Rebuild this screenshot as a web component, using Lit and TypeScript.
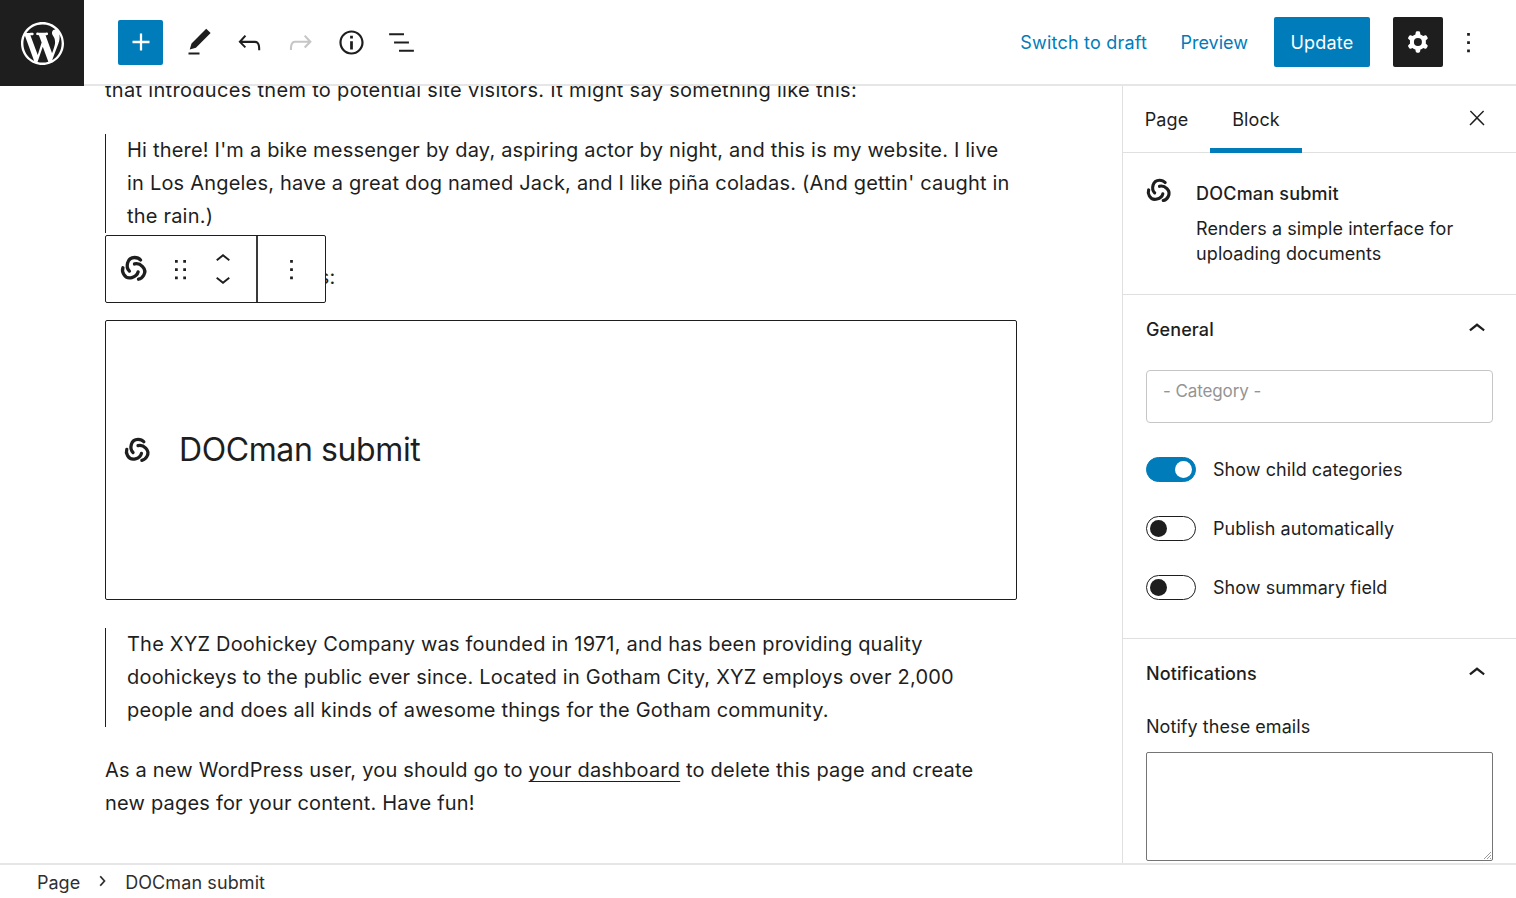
import { LitElement, html, css, svg } from "lit";
import { customElement } from "lit/decorators.js";

const P = {
  wp: "M20 10c0-5.51-4.49-10-10-10C4.48 0 0 4.49 0 10c0 5.52 4.48 10 10 10 5.51 0 10-4.48 10-10zM7.78 15.37L4.37 6.22c.55-.02 1.17-.08 1.17-.08.5-.06.44-1.13-.06-1.11 0 0-1.45.11-2.37.11-.18 0-.37 0-.58-.01C4.12 2.69 6.87 1.11 10 1.11c2.33 0 4.45.87 6.05 2.34-.68-.11-1.65.39-1.65 1.58 0 .74.45 1.36.9 2.1.35.61.55 1.36.55 2.46 0 1.49-1.4 5-1.4 5l-3.03-8.37c.54-.02.82-.17.82-.17.5-.05.44-1.25-.06-1.22 0 0-1.44.12-2.38.12-.87 0-2.33-.12-2.33-.12-.5-.03-.56 1.2-.06 1.22l.92.08 1.26 3.41zM17.41 10c.24-.64.74-1.87.43-4.25.7 1.29 1.05 2.71 1.05 4.25 0 3.29-1.73 6.24-4.4 7.78.97-2.59 1.94-5.2 2.92-7.78zM6.1 18.09C3.12 16.65 1.11 13.53 1.11 10c0-1.3.23-2.48.72-3.59C3.25 10.3 4.67 14.2 6.1 18.09zm4.03-6.63l2.58 6.98c-.86.29-1.76.45-2.71.45-.79 0-1.57-.11-2.29-.33.81-2.38 1.62-4.74 2.42-7.1z",
  plus: "M18 11.2h-5.2V6h-1.6v5.2H6v1.6h5.2V18h1.6v-5.2H18z",
  edit: "M20.1 5.1L16.9 2 6.2 12.7l-1.3 4.4 4.5-1.3L20.1 5.1zM4 20.8h8v-1.5H4v1.5z",
  undo: "M18.3 11.7c-.6-.6-1.4-.9-2.3-.9H6.7l2.9-3.3-1.1-1-4.5 5L8.5 16l1-1-2.7-2.7H16c.5 0 .9.2 1.3.5 1 1 1 3.4 1 4.5v.3h1.5v-.2c0-1.5 0-4.3-1.5-5.7z",
  redo: "M15.6 6.5l-1.1 1 2.9 3.3H8c-.9 0-1.7.3-2.3.9-1.4 1.5-1.4 4.2-1.4 5.6v.2h1.5v-.3c0-1.1 0-3.5 1-4.5.3-.3.7-.5 1.3-.5h9.2L14.5 15l1.1 1.1 4.6-4.6-4.6-5z",
  info: "M12 3.2c-4.8 0-8.8 3.9-8.8 8.8 0 4.8 3.9 8.8 8.8 8.8 4.8 0 8.8-3.9 8.8-8.8 0-4.8-4-8.8-8.8-8.8zm0 16c-4 0-7.2-3.3-7.2-7.2C4.8 8 8 4.8 12 4.8s7.2 3.3 7.2 7.2c0 4-3.2 7.2-7.2 7.2zM11 17h2v-6h-2v6zm0-8h2V7h-2v2z",
  list: "M13.8 5.2H3v1.5h10.8V5.2zm-3.6 12v1.5H21v-1.5H10.2zm7.2-6H6.6v1.5h10.8v-1.5z",
  cog: "M10.289 4.836A1 1 0 0111.275 4h1.306a1 1 0 01.987.836l.244 1.466c.787.26 1.503.679 2.108 1.218l1.393-.522a1 1 0 011.216.437l.653 1.13a1 1 0 01-.23 1.273l-1.148.944a6.025 6.025 0 010 2.435l1.149.946a1 1 0 01.23 1.272l-.653 1.13a1 1 0 01-1.216.437l-1.394-.522c-.605.54-1.32.958-2.108 1.218l-.244 1.466a1 1 0 01-.987.836h-1.306a1 1 0 01-.986-.836l-.244-1.466a5.995 5.995 0 01-2.108-1.218l-1.394.522a1 1 0 01-1.217-.436l-.653-1.131a1 1 0 01.23-1.272l1.149-.946a6.026 6.026 0 010-2.435l-1.148-.944a1 1 0 01-.23-1.272l.653-1.131a1 1 0 011.217-.437l1.393.522a5.994 5.994 0 012.108-1.218l.244-1.466zM14.929 12a3 3 0 11-6 0 3 3 0 016 0z",
  more: "M13 19h-2v-2h2v2zm0-6h-2v-2h2v2zm0-6h-2V5h2v2z",
  close: "M13 11.8l6.1-6.3-1-1-6.1 6.2-6.1-6.2-1 1 6.1 6.3-6.5 6.7 1 1 6.5-6.6 6.5 6.6 1-1z",
  up: "M6.5 12.4L12 8l5.5 4.4-.9 1.2L12 10l-4.5 3.6-1-1.2z",
  down: "M17.5 11.6L12 16l-5.5-4.4.9-1.2L12 14l4.5-3.6 1 1.2z",
  drag: "M8 7h2V5H8v2zm0 6h2v-2H8v2zm0 6h2v-2H8v2zm6-14v2h2V5h-2zm0 8h2v-2h-2v2zm0 6h2v-2h-2v2z",
  right: "M10.6 6L9.4 7l4.6 5-4.6 5 1.2 1 5.4-6z",
};

const icon = (d: string, size = 24, cls = "", vb = "0 0 24 24") =>
  html`<svg class=${cls} width=${size} height=${size} viewBox=${vb} fill="currentColor" fill-rule="evenodd" aria-hidden="true">${svg`<path d=${d}></path>`}</svg>`;

const BLADE = "M9 14.8 C5.6 11.5 6.8 3 13.5 3 C15.8 3 17.6 3.9 18.7 5.2";
const swirl = (size: number) => html`<svg width=${size} height=${size} viewBox="0 0 26 26" fill="none" stroke="currentColor" stroke-width="2.9" stroke-linecap="round" aria-hidden="true">
  ${svg`<path d=${BLADE}></path><path d=${BLADE} transform="rotate(120 13 13)"></path><path d=${BLADE} transform="rotate(240 13 13)"></path>`}
</svg>`;

@customElement("app-root")
export class AppRoot extends LitElement {
  static styles = css`
    :host { display: block; height: 898px; overflow: hidden; background: #fff; color: #1e1e1e;
      font-family: Inter, "Noto Sans", sans-serif; font-size: 18px; }
    * { box-sizing: border-box; }
    svg { display: block; flex: none; }
    .page { height: 898px; display: flex; flex-direction: column; position: relative; }

    .top { height: 86px; flex: none; display: flex; align-items: flex-start; border-bottom: 2px solid #e6e6e6; position: relative; z-index: 2; background: #fff; }
    .logo { width: 84px; height: 86px; background: #1e1e1e; color: #fff; display: flex; align-items: center; justify-content: center; flex: none; }
    .tools { display: flex; align-items: center; height: 84px; margin-left: 34px; }
    .add { width: 45px; height: 45px; background: #007cba; color: #fff; border-radius: 2px; display: flex; align-items: center; justify-content: center; margin-right: 18px; }
    .tool { width: 36px; height: 36px; display: flex; align-items: center; justify-content: center; margin-right: 14.7px; }
    .tool.off { color: #c6c6c6; }
    .actions { margin-left: auto; display: flex; align-items: center; height: 84px; }
    .link { color: #007cba; font-size: 18px; letter-spacing: .2px; }
    .link.a { margin-right: 33.4px; }
    .link.pv { letter-spacing: 0; }
    .update { margin-left: 26px; width: 96px; height: 50px; background: #007cba; color: #fff; border-radius: 2px; display: flex; align-items: center; justify-content: center; font-size: 18px; letter-spacing: .2px; }
    .gear { margin-left: 23px; width: 50px; height: 50px; background: #1e1e1e; color: #fff; border-radius: 2px; display: flex; align-items: center; justify-content: center; }
    .dots { width: 28px; margin: 0 34px 0 11px; display: flex; justify-content: center; }

    .mid { flex: 1; min-height: 0; display: flex; }
    .editor { flex: 1; min-width: 0; overflow: hidden; position: relative; }
    .flow { width: 912px; margin: -12px 0 0 105px; position: relative; font-size: 20px; line-height: 33px; letter-spacing: .2px; color: #1e1e1e; }
    .flow p { margin: 0; }
    .flow p.intro { letter-spacing: .31px; }
    .flow p.sel { border-left: 1px solid #1e1e1e; padding-left: 21px; }
    .flow p.gap1 { margin-top: 27px; }
    .flow p.under { margin-top: 28px; letter-spacing: .25px; }
    .ph { margin-top: 26px; height: 280px; border: 1px solid #1e1e1e; border-radius: 2px; display: flex; align-items: center; padding: 0 0 20px 17px; gap: 27px; }
    .ph span { font-size: 32px; letter-spacing: -.4px; line-height: 40px; }
    .flow p.after { margin-top: 28px; }
    .flow p.last { margin-top: 27px; }
    .last u { text-underline-offset: 4px; text-decoration-thickness: 1px; }
    .bar { position: absolute; left: 0; top: 161px; width: 221px; height: 68px; border: 1px solid #1e1e1e; border-radius: 2px; background: #fff; display: flex; }
    .bar-a { width: 152px; border-right: 2px solid #3a3a3a; display: flex; align-items: center; }
    .bar-a .s { margin-left: 13px; }
    .bar-a .d { margin-left: 15px; }
    .mv { margin-left: 11px; display: flex; flex-direction: column; }
    .mv svg + svg { margin-top: -10px; }
    .bar-b { flex: 1; display: flex; align-items: center; justify-content: center; }

    .side { width: 394px; flex: none; border-left: 1px solid #e0e0e0; overflow: hidden; font-size: 18px; letter-spacing: .06px; }
    .tabs { height: 67px; display: flex; align-items: stretch; border-bottom: 1px solid #e0e0e0; position: relative; letter-spacing: .1px; }
    .tab { display: flex; align-items: center; justify-content: center; font-size: 18px; height: 66px; position: relative; }
    .tab.p { width: 87px; }
    .tab.b { width: 92px; box-shadow: inset 0 -5px 0 #007cba; height: 67px; }
    .x { margin-left: auto; margin-right: 27px; display: flex; align-items: center; height: 66px; }
    .x svg { position: relative; top: -1px; }
    .card { height: 142px; border-bottom: 1px solid #e0e0e0; padding: 24px 23px 0 21.5px; display: flex; gap: 23.6px; }
    .card h2 { margin: 5px 0 0; font-size: 18px; font-weight: 500; line-height: 24px; letter-spacing: .2px; }
    .card p { margin: 10px 0 0; line-height: 25px; }
    .panel { padding: 0 23px; }
    .gen { height: 344px; border-bottom: 1px solid #e0e0e0; }
    .head { height: 70px; padding-bottom: 2px; display: flex; align-items: center; justify-content: space-between; font-size: 18px; font-weight: 500; letter-spacing: .1px; }
    .head svg { margin-right: -1px; }
    .sel-box { width: 347px; height: 53px; border: 1px solid #c6c6c6; border-radius: 4px; padding: 8px 16px; color: #949494; font-size: 17px; line-height: 24px; margin-top: 5px; letter-spacing: -.1px; }
    .tgl-row { display: flex; align-items: center; height: 26px; gap: 17px; margin-top: 33px; }
    .tgl { width: 50px; height: 25px; border-radius: 13px; border: 1px solid #1e1e1e; position: relative; flex: none; }
    .tgl i { position: absolute; top: 3px; left: 3px; width: 17px; height: 17px; border-radius: 50%; background: #1e1e1e; }
    .tgl.on { background: #007cba; border-color: #007cba; }
    .tgl.on i { left: 28px; background: #fff; }
    .notes .label { margin-top: 6px; line-height: 24px; }
    .ta { width: 347px; height: 109px; margin-top: 13px; border: 1px solid #757575; border-radius: 2px; position: relative; }
    .ta svg { position: absolute; right: 0; bottom: 0; }

    .foot { height: 35px; flex: none; border-top: 2px solid #e6e6e6; display: flex; align-items: center; padding: 1px 0 0 37px; font-size: 18px; color: #2f2f2f; letter-spacing: 0; background: #fff; position: relative; z-index: 1; }
    .foot svg { margin: 0 13.5px 0 11.5px; color: #1e1e1e; stroke: currentColor; stroke-width: .5; position: relative; top: -1px; }
    .foot .crumb { letter-spacing: .1px; }
  `;

  private toggle(label: string, on = false) {
    return html`<div class="tgl-row"><div class="tgl ${on ? "on" : ""}"><i></i></div><span>${label}</span></div>`;
  }

  render() {
    return html`<div class="page">
      <header class="top">
        <div class="logo">${icon(P.wp, 43, "", "0 0 20 20")}</div>
        <div class="tools">
          <div class="add">${icon(P.plus, 34)}</div>
          <div class="tool">${icon(P.edit, 33)}</div>
          <div class="tool">${icon(P.undo, 33)}</div>
          <div class="tool off">${icon(P.redo, 33)}</div>
          <div class="tool">${icon(P.info, 33)}</div>
          <div class="tool">${icon(P.list, 33)}</div>
        </div>
        <div class="actions">
          <span class="link a">Switch to draft</span>
          <span class="link pv">Preview</span>
          <div class="update">Update</div>
          <div class="gear">${icon(P.cog, 32)}</div>
          <div class="dots">${icon(P.more, 33)}</div>
        </div>
      </header>
      <div class="mid">
        <main class="editor">
          <div class="flow">
            <p class="intro">that introduces them to potential site visitors. It might say something like this:</p>
            <p class="sel gap1">Hi there! I'm a bike messenger by day, aspiring actor by night, and this is my website. I live in Los Angeles, have a great dog named Jack, and I like piña coladas. (And gettin' caught in the rain.)</p>
            <p class="under">...or something like this:</p>
            <div class="ph">${swirl(29)}<span>DOCman submit</span></div>
            <p class="sel after">The XYZ Doohickey Company was founded in 1971, and has been providing quality doohickeys to the public ever since. Located in Gotham City, XYZ employs over 2,000 people and does all kinds of awesome things for the Gotham community.</p>
            <p class="last">As a new WordPress user, you should go to <u>your dashboard</u> to delete this page and create new pages for your content. Have fun!</p>
            <div class="bar">
              <div class="bar-a">
                <span class="s">${swirl(30)}</span>
                <span class="d">${icon(P.drag, 33)}</span>
                <div class="mv">${icon(P.up, 30)}${icon(P.down, 30)}</div>
              </div>
              <div class="bar-b">${icon(P.more, 33)}</div>
            </div>
          </div>
        </main>
        <aside class="side">
          <div class="tabs">
            <div class="tab p">Page</div>
            <div class="tab b">Block</div>
            <div class="x">${icon(P.close, 24)}</div>
          </div>
          <div class="card">
            ${swirl(28)}
            <div><h2>DOCman submit</h2><p>Renders a simple interface for uploading documents</p></div>
          </div>
          <section class="panel gen">
            <div class="head"><span>General</span>${icon(P.up, 34)}</div>
            <div class="sel-box">- Category -</div>
            ${this.toggle("Show child categories", true)}
            ${this.toggle("Publish automatically")}
            ${this.toggle("Show summary field")}
          </section>
          <section class="panel notes">
            <div class="head"><span>Notifications</span>${icon(P.up, 34)}</div>
            <div class="label">Notify these emails</div>
            <div class="ta"><svg width="10" height="10" viewBox="0 0 10 10" stroke="#9a9a9a" stroke-width="1"><path d="M9 2 2 9M9 5 5 9M9 8 8 9"></path></svg></div>
          </section>
        </aside>
      </div>
      <footer class="foot"><span>Page</span>${icon(P.right, 20)}<span class="crumb">DOCman submit</span></footer>
    </div>`;
  }
}
